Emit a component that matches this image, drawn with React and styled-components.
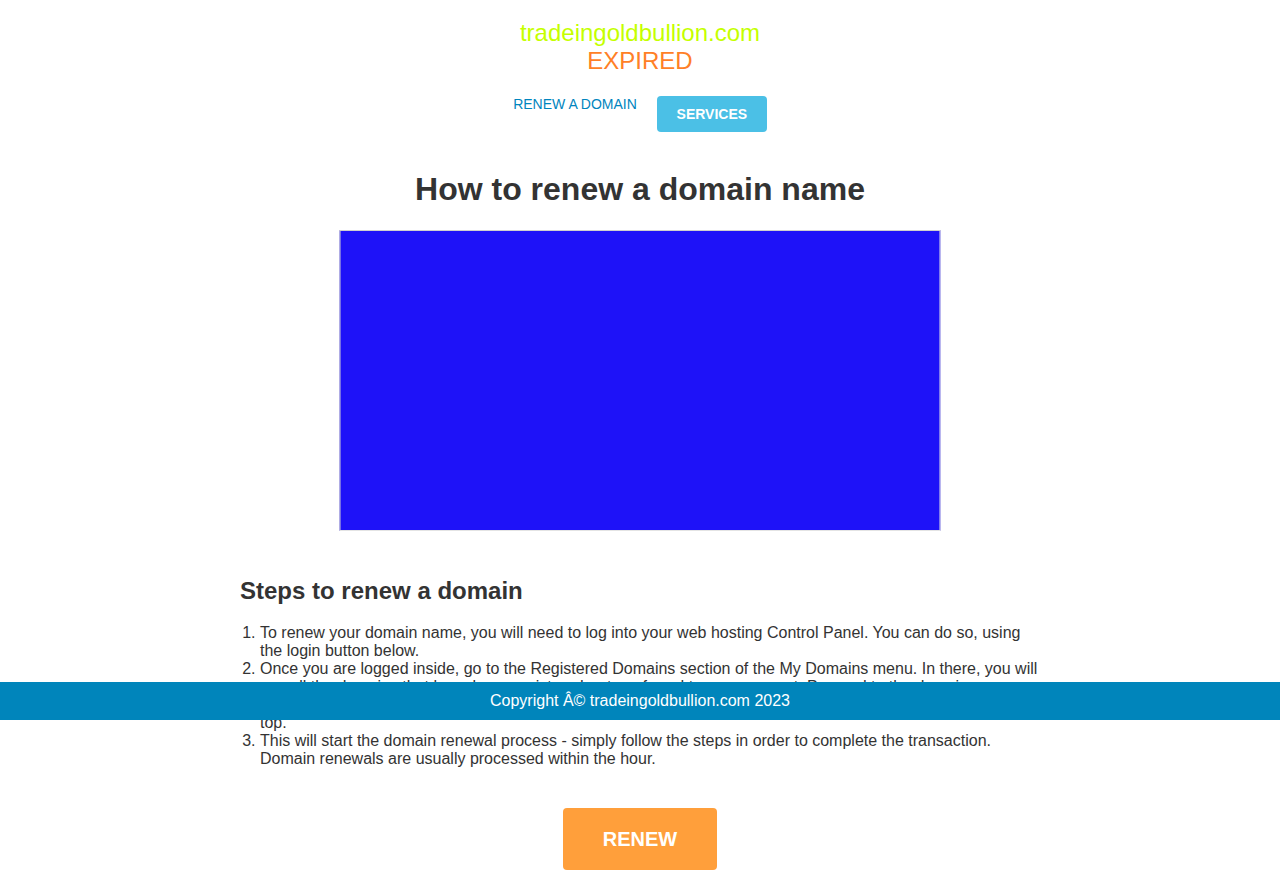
import React from "react";
import styled, { createGlobalStyle } from "styled-components";

const Global = createGlobalStyle`
  html, body { margin: 0; padding: 0; background: #fff; }
  body { font-family: "Liberation Sans", Arial, sans-serif; color: #333; }
`;

const Page = styled.div`
  display: flex;
  flex-direction: column;
  align-items: center;
  padding-top: 19px;
`;

const Logo = styled.div`
  display: flex;
  flex-direction: column;
  align-items: center;
  font-size: 24px;
  line-height: 28px;
`;

const Domain = styled.span`
  color: #c5ff00;
`;

const Status = styled.span`
  color: #ff7f27;
`;

const Nav = styled.nav`
  display: flex;
  align-items: flex-start;
  gap: 20px;
  margin-top: 21px;
`;

const NavLink = styled.a`
  font-size: 14px;
  color: #0085be;
  text-decoration: none;
  line-height: 16px;
`;

const NavButton = styled.a`
  display: flex;
  align-items: center;
  justify-content: center;
  width: 110px;
  height: 36px;
  background: #4bc0e6;
  border-radius: 4px;
  color: #fff;
  font-weight: bold;
  font-size: 14px;
  text-decoration: none;
`;

const Title = styled.h1`
  margin: 39px 0 0;
  font-size: 32px;
  line-height: 37px;
  font-weight: bold;
  color: #333;
`;

const Picture = styled.div`
  margin-top: 22px;
  width: 599px;
  height: 299px;
  background: #1e12f8;
  border: 1px solid #cfcfcf;
  border-right-color: #e4e4e4;
  border-bottom-color: #e4e4e4;
  box-sizing: content-box;
  transform: translateX(-0.5px);
`;

const Content = styled.section`
  width: 800px;
  margin-top: 46px;
`;

const Subtitle = styled.h2`
  margin: 0;
  font-size: 24px;
  line-height: 28px;
  font-weight: bold;
  color: #333;
`;

const Steps = styled.ol`
  margin: 19px 0 0;
  padding-left: 20px;
  font-size: 16px;
  line-height: 18px;
  color: #333;
`;

const Step = styled.li``;

const RenewButton = styled.a`
  display: flex;
  align-items: center;
  justify-content: center;
  margin-top: 40px;
  width: 154px;
  height: 62px;
  background: #ff9f3b;
  border-radius: 4px;
  color: #fff;
  font-weight: bold;
  font-size: 20px;
  text-decoration: none;
`;

const Footer = styled.footer`
  position: absolute;
  left: 0;
  right: 0;
  top: 682px;
  height: 38px;
  background: #0085bb;
  color: #fff;
  font-size: 16px;
  display: flex;
  align-items: center;
  justify-content: center;
`;

export default function App() {
  return (
    <>
      <Global />
      <Page>
        <Logo>
          <Domain>tradeingoldbullion.com</Domain>
          <Status>EXPIRED</Status>
        </Logo>
        <Nav>
          <NavLink href="#">RENEW A DOMAIN</NavLink>
          <NavButton href="#">SERVICES</NavButton>
        </Nav>
        <Title>How to renew a domain name</Title>
        <Picture />
        <Content>
          <Subtitle>Steps to renew a domain</Subtitle>
          <Steps>
            <Step>
              To renew your domain name, you will need to log into your web hosting Control Panel. You can do so, using the login button below.
            </Step>
            <Step>
              Once you are logged inside, go to the Registered Domains section of the My Domains menu. In there, you will see all the domains that have been registered or transferred to your account. Proceed to the domain you would like to renew and then click on the Renew button, which you will find in the domain details panel at the top.
            </Step>
            <Step>
              This will start the domain renewal process - simply follow the steps in order to complete the transaction. Domain renewals are usually processed within the hour.
            </Step>
          </Steps>
        </Content>
        <RenewButton href="#">RENEW</RenewButton>
      </Page>
      <Footer>Copyright Â© tradeingoldbullion.com 2023</Footer>
    </>
  );
}
